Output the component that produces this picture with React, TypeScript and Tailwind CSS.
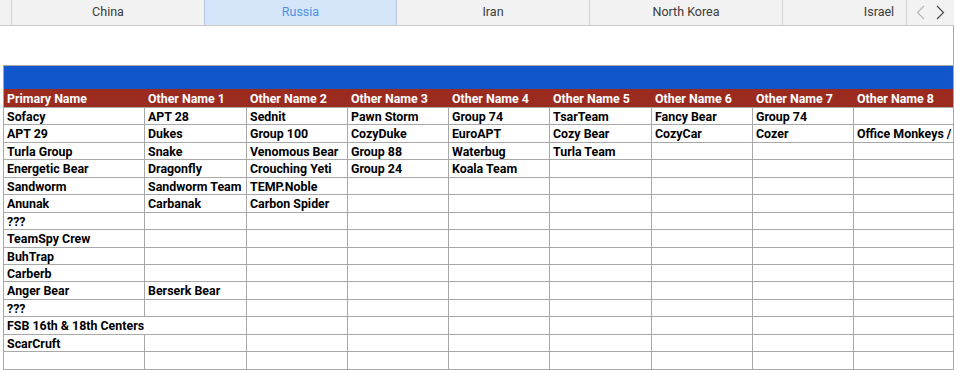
import React from 'react';

const tabs = ['China', 'Russia', 'Iran', 'North Korea', 'Israel'];

const headers = [
  'Primary Name',
  'Other Name 1',
  'Other Name 2',
  'Other Name 3',
  'Other Name 4',
  'Other Name 5',
  'Other Name 6',
  'Other Name 7',
  'Other Name 8',
];

// each row: primary name followed by aliases
const rows: string[][] = [
  ['Sofacy', 'APT 28', 'Sednit', 'Pawn Storm', 'Group 74', 'TsarTeam', 'Fancy Bear', 'Group 74', ''],
  ['APT 29', 'Dukes', 'Group 100', 'CozyDuke', 'EuroAPT', 'Cozy Bear', 'CozyCar', 'Cozer', 'Office Monkeys /'],
  ['Turla Group', 'Snake', 'Venomous Bear', 'Group 88', 'Waterbug', 'Turla Team'],
  ['Energetic Bear', 'Dragonfly', 'Crouching Yeti', 'Group 24', 'Koala Team'],
  ['Sandworm', 'Sandworm Team', 'TEMP.Noble'],
  ['Anunak', 'Carbanak', 'Carbon Spider'],
  ['???'],
  ['TeamSpy Crew'],
  ['BuhTrap'],
  ['Carberb'],
  ['Anger Bear', 'Berserk Bear'],
  ['???'],
  ['FSB 16th & 18th Centers'],
  ['ScarCruft'],
  [],
];

const cols = 'grid grid-cols-[141px_102px_101px_101px_101px_102px_101px_101px_140px]';

function TabBar() {
  return (
    <div className="flex h-[26px] shrink-0 border-b border-[#c9c9c9] bg-[#f2f2f2] font-['Roboto',sans-serif] text-[12.5px]">
      <div className="flex flex-1 overflow-hidden">
        <div className="w-[12px] shrink-0 border-r border-[#d4d4d4]" />
        {tabs.map((t) => {
          const active = t === 'Russia';
          return (
            <div
              key={t}
              className={
                active
                  ? 'flex w-[193px] shrink-0 items-center justify-center border-r border-[#b7c7e2] bg-[#d5e6fb] text-[#4d92e3] -ml-px border-l'
                  : 'flex w-[193px] shrink-0 items-center justify-center border-r border-[#d4d4d4] text-[#3b3b3b]'
              }
            >
              {t}
            </div>
          );
        })}
      </div>
      <div className="flex w-[48px] shrink-0 items-center justify-around border-l border-[#d4d4d4] px-[4px]">
        <svg width="9" height="15" viewBox="0 0 9 15" fill="none">
          <polyline points="8,1 1.5,7.5 8,14" stroke="#b9b9b9" strokeWidth="1.2" />
        </svg>
        <svg width="9" height="15" viewBox="0 0 9 15" fill="none">
          <polyline points="1,1 7.5,7.5 1,14" stroke="#4a4a4a" strokeWidth="1.2" />
        </svg>
      </div>
    </div>
  );
}

function SheetGrid() {
  return (
    <div className="ml-[3px] mt-[39px] border-l border-t border-[#a8a8a8] font-['Roboto',sans-serif] text-[12.4px] font-bold">
      <div className="h-[23px] bg-[#1256cc]" />
      <div className={`${cols} h-[19px] border-b border-[#a8a8a8] bg-[#9b2b1f] text-white`}>
        {headers.map((h) => (
          <div key={h} className="flex items-center whitespace-nowrap pl-[3px] pt-[1px]">
            {h}
          </div>
        ))}
      </div>
      {rows.map((r, i) => {
        const overflow = r.length === 1 && r[0].length > 16;
        return (
          <div key={i} className={`${cols} h-[17.45px] border-b border-[#a8a8a8] text-black`}>
            {headers.map((_, c) => {
              if (overflow && c === 1) return null;
              return (
                <div
                  key={c}
                  className={`flex items-center overflow-hidden whitespace-nowrap border-r border-[#a8a8a8] pl-[3px] pt-[2px] leading-none ${
                    overflow && c === 0 ? 'col-span-2' : ''
                  }`}
                >
                  {r[c] ?? ''}
                </div>
              );
            })}
          </div>
        );
      })}
    </div>
  );
}

export default function App() {
  return (
    <div className="flex h-[370px] w-[954px] flex-col overflow-hidden bg-white">
      <TabBar />
      <div className="flex-1 overflow-hidden border-r border-[#a8a8a8]">
        <div className="w-[1100px]">
          <SheetGrid />
        </div>
      </div>
    </div>
  );
}
